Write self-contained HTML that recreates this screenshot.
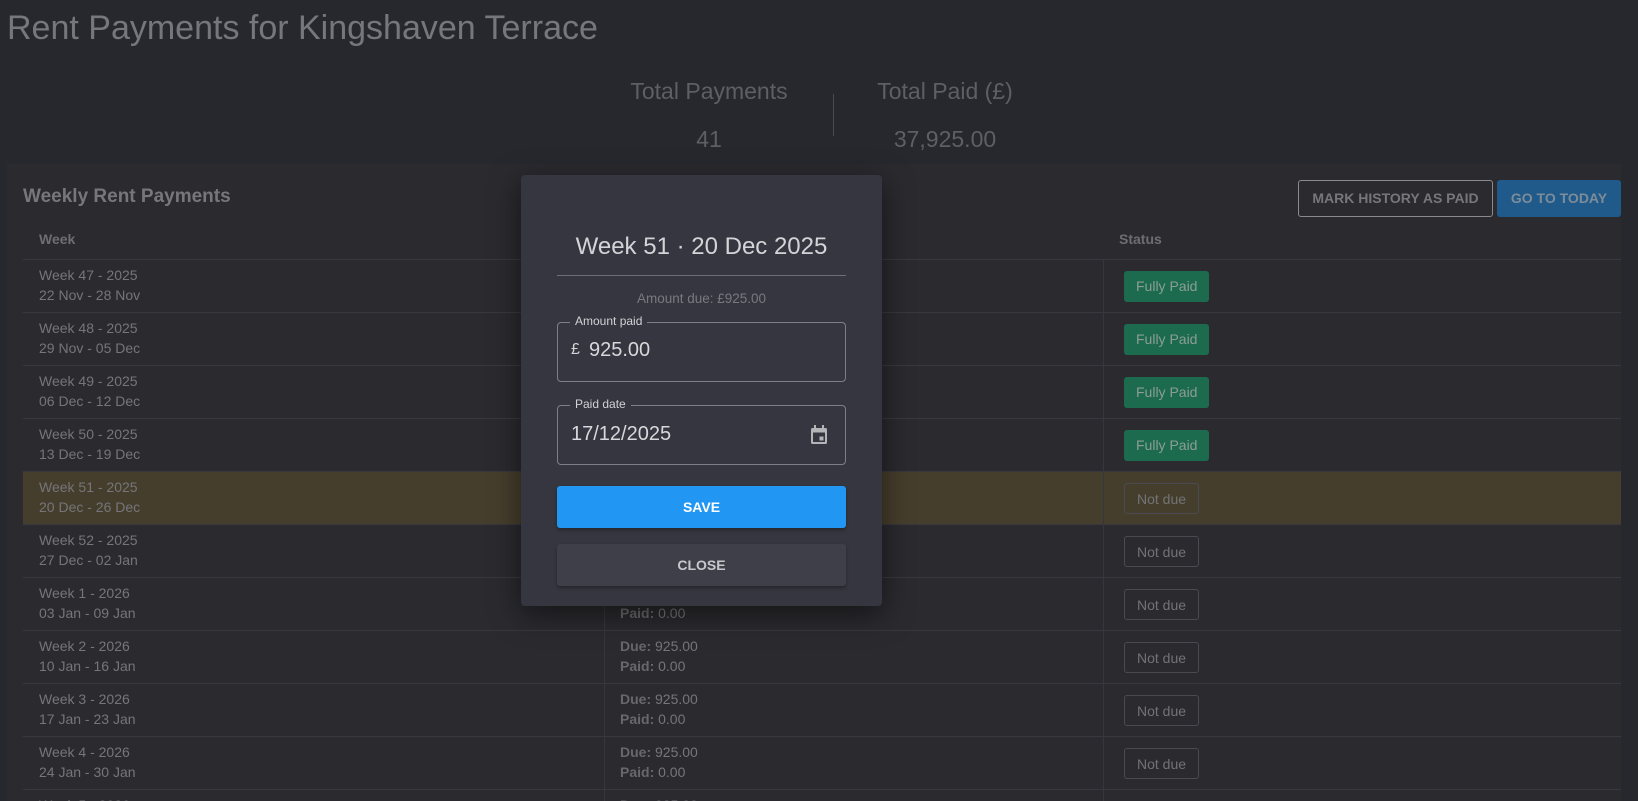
<!DOCTYPE html>
<html><head><meta charset="utf-8"><style>
*{box-sizing:border-box;margin:0;padding:0}
html,body{width:1638px;height:801px;overflow:hidden}
body{background:#27282d;font-family:"Liberation Sans",sans-serif;position:relative;color:#7d7d80}
#wrap{position:absolute;left:0;top:0;width:1638px;height:801px;overflow:hidden}
.abs{position:absolute}
h1{position:absolute;left:7px;top:9px;font-size:34px;font-weight:400;color:#77777b;white-space:nowrap}
.stat{position:absolute;text-align:center;font-size:23px;color:#5e5f63}
.card{position:absolute;left:7px;top:164px;width:1614px;height:637px;background:#2a2a2f}
.row{position:absolute;left:23px;width:1598px;height:53px;border-bottom:1px solid #38393e}
.row .c1{position:absolute;left:16px;top:5px;font-size:14px;line-height:20px;color:#75757a}
.row .c2{position:absolute;left:597px;top:5px;font-size:14px;line-height:20px;color:#75757a}
.row .c2 b{color:#68686c}
.vl{position:absolute;top:0;bottom:0;width:1px;background:#36373c}
.badge{position:absolute;left:1101px;top:11px;height:31px;padding:0 12px;line-height:31px;font-size:14px;border-radius:3px}
.fp{background:#1c6b4e;color:#8c9d95}
.nd{border:1px solid #4a4b50;color:#737377}
.modal{position:absolute;left:521px;top:175px;width:361px;height:431px;background:#35363f;border-radius:4px;box-shadow:0 8px 30px rgba(0,0,0,.5)}
.fld{position:absolute;left:36px;width:289px;border:1px solid #7f8087;border-radius:4px}
.lbl{position:absolute;left:12px;top:-9px;background:#35363f;padding:0 5px;font-size:12px;color:#d2d2d6}
</style></head><body>
<div id="wrap">
<h1>Rent Payments for Kingshaven Terrace</h1>
<div class="stat" style="left:609px;top:78px;width:200px">Total Payments</div>
<div class="stat" style="left:609px;top:126px;width:200px">41</div>
<div class="abs" style="left:833px;top:94px;width:1px;height:42px;background:#4a4b50"></div>
<div class="stat" style="left:845px;top:78px;width:200px">Total Paid (£)</div>
<div class="stat" style="left:845px;top:126px;width:200px">37,925.00</div>
<div class="card">
<div class="abs" style="left:16px;top:22px;font-size:19px;font-weight:bold;color:#77777b">Weekly Rent Payments</div>
<div class="abs" style="left:1291px;top:16px;width:195px;height:37px;border:1px solid #8a8a8e;border-radius:3px;text-align:center;line-height:35px;font-size:14px;font-weight:bold;color:#77777b">MARK HISTORY AS PAID</div>
<div class="abs" style="left:1490px;top:16px;width:124px;height:37px;background:#1f5a8a;border-radius:3px;text-align:center;line-height:37px;font-size:14px;font-weight:bold;color:#7d8c99">GO TO TODAY</div>
<div class="abs" style="left:32px;top:67px;font-size:14px;font-weight:bold;color:#6e6e72">Week</div>
<div class="abs" style="left:1112px;top:67px;font-size:14px;font-weight:bold;color:#6e6e72">Status</div>
<div class="abs" style="left:16px;top:95px;width:1598px;height:1px;background:#38393e"></div>
</div>
<div id="rows"></div>
<div class="modal">
<div class="abs" style="left:0;width:361px;top:58px;text-align:center;font-size:24px;color:#d4d4d8">Week 51 · 20 Dec 2025</div>
<div class="abs" style="left:36px;top:100px;width:289px;height:1px;background:#6e6f76"></div>
<div class="abs" style="left:0;width:361px;top:116px;text-align:center;font-size:13.5px;color:#797a80">Amount due: £925.00</div>
<div class="fld" style="top:147px;height:60px"><div class="lbl">Amount paid</div><div class="abs" style="left:13px;top:18px;font-size:16px;color:#d4d4d8">£</div><div class="abs" style="left:31px;top:16px;font-size:20px;color:#d8d8dc">925.00</div></div>
<div class="fld" style="top:230px;height:60px"><div class="lbl">Paid date</div><div class="abs" style="left:13px;top:17px;font-size:20px;color:#d8d8dc">17/12/2025</div>
<svg class="abs" style="left:251px;top:18px" width="20" height="22" viewBox="0 0 20 22"><rect x="2" y="4" width="16" height="16" rx="1.5" fill="#b4b4b8"/><rect x="4" y="8.5" width="12" height="9.5" fill="#35363f"/><rect x="5" y="1" width="2" height="4" fill="#b4b4b8"/><rect x="13" y="1" width="2" height="4" fill="#b4b4b8"/><rect x="10.5" y="12.5" width="4" height="4" fill="#b4b4b8"/></svg></div>
<div class="abs" style="left:36px;top:311px;width:289px;height:42px;background:#2196f3;border-radius:3px;text-align:center;line-height:42px;font-size:14px;font-weight:bold;color:#fff;box-shadow:0 2px 3px rgba(0,0,0,.3)">SAVE</div>
<div class="abs" style="left:36px;top:369px;width:289px;height:42px;background:#3e3f49;border-radius:3px;text-align:center;line-height:42px;font-size:14px;font-weight:bold;color:#c8c8cc;box-shadow:0 2px 3px rgba(0,0,0,.3)">CLOSE</div>
</div>
</div>
<script>
var d=[["Week 47 - 2025","22 Nov - 28 Nov",1],["Week 48 - 2025","29 Nov - 05 Dec",1],["Week 49 - 2025","06 Dec - 12 Dec",1],["Week 50 - 2025","13 Dec - 19 Dec",1],["Week 51 - 2025","20 Dec - 26 Dec",0],["Week 52 - 2025","27 Dec - 02 Jan",0],["Week 1 - 2026","03 Jan - 09 Jan",0],["Week 2 - 2026","10 Jan - 16 Jan",0],["Week 3 - 2026","17 Jan - 23 Jan",0],["Week 4 - 2026","24 Jan - 30 Jan",0],["Week 5 - 2026","31 Jan - 06 Feb",0]];
var h="";d.forEach(function(r,i){var top=260+i*53;
h+='<div class="row" style="top:'+top+'px;'+(i==4?'background:#463e2c;':'')+'"><div class="vl" style="left:581px"></div><div class="vl" style="left:1080px"></div><div class="c1">'+r[0]+'<br>'+r[1]+'</div><div class="c2"><b>Due:</b> 925.00<br><b>Paid:</b> '+(r[2]?'925.00':'0.00')+'</div><div class="badge '+(r[2]?'fp':'nd')+'">'+(r[2]?'Fully Paid':'Not due')+'</div></div>';});
document.getElementById('rows').innerHTML=h;
</script>
</body></html>
